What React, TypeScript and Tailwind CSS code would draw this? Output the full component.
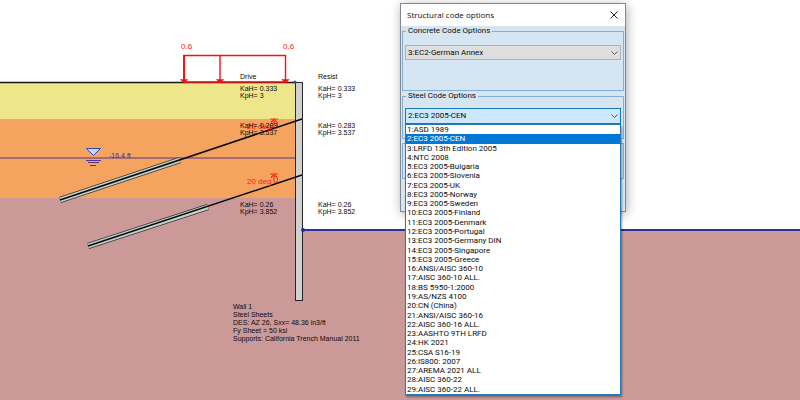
type SoilValue = { y: number; ka: string; kp: string };

const soilValues: SoilValue[] = [
  { y: 91, ka: "KaH= 0.333", kp: "KpH= 3" },
  { y: 128, ka: "KaH= 0.283", kp: "KpH= 3.537" },
  { y: 207, ka: "KaH= 0.26", kp: "KpH= 3.852" },
];

const wallNotes = [
  "Wall 1",
  "Steel Sheets",
  "DES: AZ 26, Sxx= 48.36 in3/ft",
  "Fy Sheet = 50 ksi",
  "Supports: California Trench Manual 2011",
];

const steelCodes = [
  "1:ASD 1989",
  "2:EC3 2005-CEN",
  "3:LRFD 13th Edition 2005",
  "4:NTC 2008",
  "5:EC3 2005-Bulgaria",
  "6:EC3 2005-Slovenia",
  "7:EC3 2005-UK",
  "8:EC3 2005-Norway",
  "9:EC3 2005-Sweden",
  "10:EC3 2005-Finland",
  "11:EC3 2005-Denmark",
  "12:EC3 2005-Portugal",
  "13:EC3 2005-Germany DIN",
  "14:EC3 2005-Singapore",
  "15:EC3 2005-Greece",
  "16:ANSI/AISC 360-10",
  "17:AISC 360-10 ALL.",
  "18:BS 5950-1:2000",
  "19:AS/NZS 4100",
  "20:CN (China)",
  "21:ANSI/AISC 360-16",
  "22:AISC 360-16 ALL.",
  "23:AASHTO 9TH LRFD",
  "24:HK 2021",
  "25:CSA S16-19",
  "26:IS800: 2007",
  "27:AREMA 2021 ALL",
  "28:AISC 360-22",
  "29:AISC 360-22 ALL.",
];

const Anchor = ({ x1, y1, x2, y2 }: { x1: number; y1: number; x2: number; y2: number }) => (
  <g>
    <line x1={x1} y1={y1} x2={x2} y2={y2} stroke="#333c3c" strokeWidth="6.4" />
    <line x1={x1} y1={y1} x2={x2} y2={y2} stroke="#c6cec8" strokeWidth="4.6" />
  </g>
);

const AngleMark = ({ y }: { y: number }) => (
  <g stroke="#ff2010" strokeWidth="0.9" fill="none">
    <path d={`M270 ${y}h8M274 ${y}v8M271 ${y + 3}l3 -3l3 3`} />
    <path d={`M271 ${y + 4}a3.5 3.500 0 1 1 3 5`} />
  </g>
);

const Excavation = () => (
  <svg
    viewBox="0 0 800 400"
    className="block h-auto w-full font-['Liberation_Sans',Arial,sans-serif]"
    role="img"
    aria-label="Excavation section"
  >
    <rect x="0" y="82" width="296" height="37" fill="#eee68b" />
    <rect x="0" y="119" width="296" height="79" fill="#f4a45f" />
    <rect x="0" y="198" width="296" height="202" fill="#cc9999" />
    <rect x="295" y="230" width="505" height="170" fill="#cc9999" />
    <path d="M0 82.500H296" stroke="#181818" strokeWidth="1.4" />
    <path d="M0 158H296" stroke="#56358c" strokeWidth="1.2" />
    <path d="M302 230H800" stroke="#30309a" strokeWidth="2" />

    {/* Water level */}
    <path d="M86.500 148.500H100.500L93.500 155.500Z" fill="#b8dcff" stroke="#3944b4" />
    <path d="M86 160.500H101M88 162.500H99M90 165.500H96" stroke="#593487" />
    <text x="109" y="158" fontSize="7" fill="#4a1f9c">-16.4 ft</text>

    {/* Wall and tiebacks */}
    <rect x="295.500" y="82.500" width="7" height="218" fill="#d0d0d0" stroke="#252525" />
    <Anchor x1={60} y1={200} x2={180} y2={160} />
    <Anchor x1={88} y1={246} x2={208} y2={207} />
    <path d="M60 200L302 119M88 246L302 175" stroke="#090909" strokeWidth="1.5" />
    <circle cx="303" cy="230" r="2" fill="#202da4" />

    {/* Surcharge */}
    <g stroke="#f41212" strokeWidth="1.400" fill="none">
      <path d="M184 82V55.500H285.500V82M220 55.500V82M184 82H286" />
      <path d="M184 55V82" strokeWidth="2" />
      <path d="M181.500 80L184 82.500L186.500 80ZM217.500 80L220 82.500L222.500 80ZM283 80L285.500 82.500L288 80Z" fill="#f41212" />
    </g>
    <circle cx="295" cy="82" r="1.500" fill="#3948ae" />
    <g fontSize="8" fill="#ff2020">
      <text x="181" y="49">0.6</text>
      <text x="283" y="49">0.6</text>
      <text x="247" y="129">20 deg</text>
      <text x="247" y="184">20 deg</text>
    </g>
    <AngleMark y={119} />
    <AngleMark y={174} />

    <g fontSize="7" fill="#0c0c0c">
      <text x="240" y="79">Drive</text>
      <text x="318" y="79">Resist</text>
      {soilValues.map((value) => (
        <g key={value.y}>
          <text x="240" y={value.y}>{value.ka}</text>
          <text x="240" y={value.y + 7}>{value.kp}</text>
          <text x="318" y={value.y}>{value.ka}</text>
          <text x="318" y={value.y + 7}>{value.kp}</text>
        </g>
      ))}
      {wallNotes.map((note, i) => (
        <text key={note} x="233" y={309 + i * 8}>{note}</text>
      ))}
    </g>
  </svg>
);

const Chevron = () => (
  <svg
    viewBox="0 0 7 5"
    className="pointer-events-none absolute top-1.5 right-[3px] h-[5px] w-[7px]"
    fill="none"
    stroke="#555"
    aria-hidden="true"
  >
    <path d="M0.500 0.500L3.500 3.500L6.500 0.500" />
  </svg>
);

const CodeDialog = () => (
  <section
    role="dialog"
    aria-labelledby="dialog-title"
    className="absolute top-[3px] left-1/2 w-[226px] border border-[#828990] bg-[#d5e6f2] pb-8 font-[Roboto,sans-serif] text-[8px] text-[#0c0c0c] shadow-[1px_2px_10px_#0005]"
  >
    <header className="flex h-[22px] items-center justify-between bg-white px-1.5">
      <h1 id="dialog-title" className="font-['Open_Sans','Noto_Sans',sans-serif] leading-3">
        Structural code options
      </h1>
      <button type="button" aria-label="Close" className="p-px">
        <svg viewBox="0 0 8 8" className="size-2" fill="none" stroke="#222">
          <path d="M0.500 0.500L7.500 7.500M7.500 0.500L0.500 7.500" />
        </svg>
      </button>
    </header>

    <fieldset className="mx-px h-[65px] border border-[#83add5] px-0.5">
      <legend className="ml-px px-0.5 leading-[10px]">
        <label htmlFor="concrete-code">Concrete Code Options</label>
      </legend>
      <div className="relative mt-[9px]">
        <select
          id="concrete-code"
          className="block h-[15px] w-full appearance-none border border-[#adb2b6] bg-[#dedede] pl-0.5 leading-3"
        >
          <option>3:EC2-German Annex</option>
        </select>
        <Chevron />
      </div>
    </fieldset>

    <fieldset className="mx-px h-12 border border-[#83add5] px-0.5">
      <legend className="ml-px px-0.5 leading-[10px]">
        <label htmlFor="steel-code">Steel Code Options</label>
      </legend>
      <div className="relative mt-[7px]">
        <select
          id="steel-code"
          defaultValue="2:EC3 2005-CEN"
          className="block h-4 w-full appearance-none border border-[#1776b8] bg-[#cce8ff] pl-0.5 leading-3"
        >
          {steelCodes.map((code) => (
            <option key={code}>{code}</option>
          ))}
        </select>
        <Chevron />
        <ul
          role="listbox"
          aria-label="Steel codes"
          className="absolute top-full left-0 z-10 grid h-[271px] w-full auto-rows-fr border border-[#2779b5] bg-white leading-[9px] shadow-[1px_2px_2px_#0006]"
        >
          {steelCodes.map((code) => (
            <li
              key={code}
              role="option"
              aria-selected={code === "2:EC3 2005-CEN"}
              className="pl-px whitespace-nowrap aria-selected:bg-[#0078d7] aria-selected:text-white"
            >
              {code}
            </li>
          ))}
        </ul>
      </div>
    </fieldset>
    <div className="mx-px mt-1 h-9 border border-[#83add5]" />
  </section>
);

const App = () => (
  <main className="relative overflow-hidden bg-white font-['Liberation_Sans',Arial,sans-serif]">
    <Excavation />
    <CodeDialog />
  </main>
);

export default App;
